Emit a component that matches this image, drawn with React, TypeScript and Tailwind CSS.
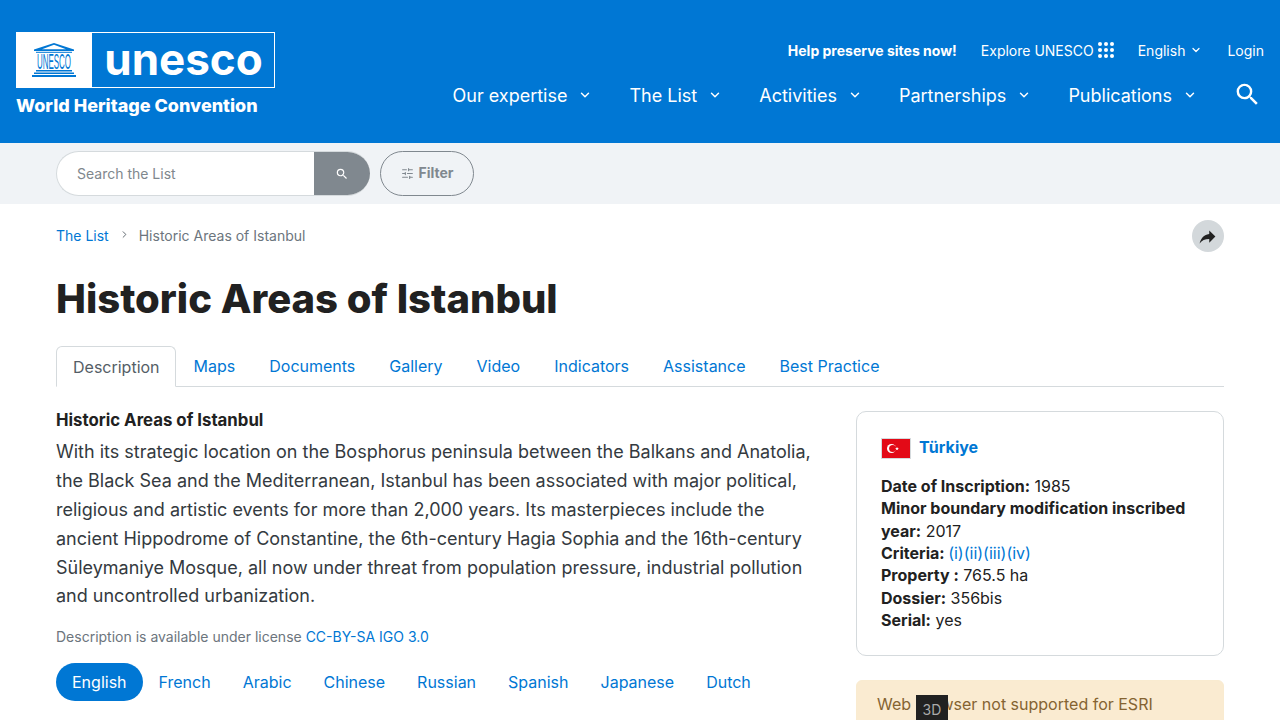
import { ChevronDown, ChevronRight, SlidersHorizontal } from "lucide-react";

const mainNav = ["Our expertise", "The List", "Activities", "Partnerships", "Publications"];
const tabs = ["Maps", "Documents", "Gallery", "Video", "Indicators", "Assistance", "Best Practice"];
const languages = ["French", "Arabic", "Chinese", "Russian", "Spanish", "Japanese", "Dutch"];

function SearchIcon({ size, className }: { size: number; className?: string }) {
  return (
    <svg width={size} height={size} viewBox="0 0 24 24" fill="currentColor" className={className}>
      <path d="M15.500 14h-.79l-.28-.27A6.471 6.471 0 0 0 16 9.500 6.500 6.500 0 1 0 9.500 16c1.610 0 3.090-.59 4.230-1.570l.27.28v.79l5 4.990L20.490 19l-4.990-5zm-6 0C7.010 14 5 11.990 5 9.500S7.010 5 9.500 5 14 7.010 14 9.500 11.990 14 9.500 14z" />
    </svg>
  );
}

function TempleLogo() {
  return (
    <svg width="46" height="36" viewBox="0 0 46 36" className="text-[#0077d4]" fill="currentColor">
      <path d="M23 1 3 7.500V9h40V7.500zM23 2.800 35 7.300H11z" fillRule="evenodd" />
      <rect x="5" y="9.800" width="36" height="1" />
      <text transform="translate(6 27) scale(0.36 1)" fontSize="22" fontFamily="'Liberation Sans', sans-serif">
        UNESCO
      </text>
      <rect x="5" y="28" width="36" height="1.500" />
      <rect x="3" y="30.500" width="40" height="1.500" />
      <rect x="1" y="33" width="44" height="2" />
    </svg>
  );
}

function Logo() {
  return (
    <div className="flex w-[259px] flex-col">
      <div className="flex h-[56px] bg-white">
        <div className="flex w-[75px] items-center justify-center">
          <TempleLogo />
        </div>
        <div className="flex flex-1 items-center justify-center border border-white bg-[#0077d4] pl-[1px]">
          <span className="-translate-y-px text-[44px] leading-none font-bold text-white">unesco</span>
        </div>
      </div>
      <div className="mt-[5px] text-[18px] leading-[26px] font-extrabold whitespace-nowrap text-white">
        World Heritage Convention
      </div>
    </div>
  );
}

function DotGrid() {
  return (
    <svg width="16" height="16" viewBox="0 0 16 16" fill="white">
      {[2, 8, 14].flatMap((y) =>
        [2, 8, 14].map((x) => <circle key={`${x}-${y}`} cx={x} cy={y} r="2" />),
      )}
    </svg>
  );
}

function Header() {
  return (
    <header className="flex h-[143px] justify-between bg-[#0077d4] pt-[32px] pr-[16px] pl-[16px] text-white">
      <Logo />
      <div className="flex flex-col items-end">
        <div className="flex h-[36px] items-center text-[14px]">
          <span className="font-bold">Help preserve sites now!</span>
          <span className="ml-[24px]">Explore UNESCO</span>
          <span className="ml-[4px]">
            <DotGrid />
          </span>
          <span className="ml-[24px]">English</span>
          <ChevronDown size={12} strokeWidth={2.5} className="ml-[5px]" />
          <span className="ml-[25px]">Login</span>
        </div>
        <nav className="mt-[9px] flex h-[36px] items-center text-[18px]">
          {mainNav.map((item) => (
            <div key={item} className="mr-[37px] flex items-center">
              <span>{item}</span>
              <ChevronDown size={14} strokeWidth={2.5} className="ml-[11px]" />
            </div>
          ))}
          <SearchIcon size={29} className="mr-[2px] -ml-px -translate-y-px" />
        </nav>
      </div>
    </header>
  );
}

function SearchBar() {
  return (
    <div className="flex h-[61px] items-start gap-[10px] bg-[#f0f3f6] pt-[8px] pl-[56px]">
      <div className="flex h-[45px] w-[314px] overflow-hidden rounded-full border border-r-0 border-[#d5dadd] bg-white">
        <div className="flex flex-1 items-center pl-[20px] text-[14px] text-[#7f878d]">Search the List</div>
        <div className="flex w-[56px] items-center justify-center bg-[#80888f] text-white">
          <SearchIcon size={14} />
        </div>
      </div>
      <div className="flex h-[45px] w-[94px] items-center justify-center gap-[4px] rounded-full border border-[#80888f] pl-[1px] text-[14px] font-bold text-[#80888f]">
        <SlidersHorizontal size={13} />
        <span className="-translate-y-px">Filter</span>
      </div>
    </div>
  );
}

function Breadcrumb() {
  return (
    <div className="flex h-[32px] items-center justify-between text-[14px]">
      <div className="flex -translate-y-px items-center">
        <span className="text-[#0077d4]">The List</span>
        <ChevronRight size={11} strokeWidth={2} className="mr-[9px] ml-[10px] -translate-y-px text-[#555e66]" />
        <span className="text-[#6c757d]">Historic Areas of Istanbul</span>
      </div>
      <div className="flex h-[32px] w-[32px] items-center justify-center rounded-full bg-[#d3d8db]">
        <svg width="21" height="21" viewBox="0 0 24 24" fill="#212121" className="-translate-x-px">
          <path d="M14 9V5l7 7-7 7v-4.100c-5 0-8.500 1.600-11 5.100 1-5 4-10 11-11z" />
        </svg>
      </div>
    </div>
  );
}

function Tabs() {
  return (
    <div className="mt-[23px] flex h-[41px] border-b border-[#d5dadd] text-[16px]">
      <div className="-mb-px mr-px flex h-[41px] items-center rounded-t-[6px] border border-b-white border-[#d5dadd] bg-white pr-[15px] pl-[16px] text-[#555e66]">
        Description
      </div>
      {tabs.map((tab) => (
        <div key={tab} className="flex items-center px-[17px] text-[#0077d4]">
          {tab}
        </div>
      ))}
    </div>
  );
}

function Description() {
  return (
    <div className="-mt-[3px] w-[768px] shrink-0">
      <h2 className="text-[16.800px] leading-[24px] font-bold text-[#212121]">Historic Areas of Istanbul</h2>
      <p className="mt-[6.400px] text-[18px] leading-[28.800px] text-[#343a40]">
        With its strategic location on the Bosphorus peninsula between the Balkans and Anatolia, the Black Sea and the
        Mediterranean, Istanbul has been associated with major political, religious and artistic events for more than
        2,000 years. Its masterpieces include the ancient Hippodrome of Constantine, the 6th-century Hagia Sophia and
        the 16th-century Süleymaniye Mosque, all now under threat from population pressure, industrial pollution and
        uncontrolled urbanization.
      </p>
      <p className="mt-[14.600px] text-[14px] leading-[21px] text-[#6c757d]">
        Description is available under license <span className="text-[#0077d4]">CC-BY-SA IGO 3.0</span>
      </p>
      <div className="mt-[16px] flex items-center text-[16px] text-[#0077d4]">
        <span className="flex h-[38px] items-center rounded-full bg-[#0077d4] px-[16px] text-white">English</span>
        {languages.map((lang) => (
          <span key={lang} className="px-[16px]">
            {lang}
          </span>
        ))}
      </div>
    </div>
  );
}

function InfoCard() {
  return (
    <div className="h-[245px] rounded-[10px] border border-[#d5dadd] px-[24px] pt-[24px] text-[16px] leading-[22.400px] text-[#212121]">
      <div className="flex h-[24px] items-center">
        <svg width="30" height="21" viewBox="0 0 30 21" className="mr-[8px]">
          <rect width="30" height="21" fill="#d5dadd" />
          <rect x="1" y="1" width="28" height="19" fill="#e30a17" />
          <circle cx="10.500" cy="10.500" r="4.500" fill="#fff" />
          <circle cx="11.700" cy="10.500" r="3.600" fill="#e30a17" />
          <path d="M16 8.800l.5 1.300 1.400 0-1.100.9.400 1.300-1.200-.8-1.200.8.400-1.300-1.100-.9 1.400 0z" fill="#fff" />
        </svg>
        <span className="-translate-y-px font-bold text-[#0077d4]">Türkiye</span>
      </div>
      <div className="mt-[14.800px]">
        <div>
          <b>Date of Inscription:</b> 1985
        </div>
        <div>
          <b>Minor boundary modification inscribed year:</b> 2017
        </div>
        <div>
          <b>Criteria:</b> <span className="-ml-px text-[#0077d4]">(i)(ii)(iii)(iv)</span>
        </div>
        <div>
          <b>Property :</b> 765.5 ha
        </div>
        <div>
          <b>Dossier:</b> 356bis
        </div>
        <div>
          <b>Serial:</b> yes
        </div>
      </div>
    </div>
  );
}

function Sidebar() {
  return (
    <aside className="relative w-[368px] shrink-0">
      <InfoCard />
      <div className="mt-[24px] h-[80px] rounded-[6px] border border-[#f9ebd0] bg-[#faebd1] px-[20px] pt-[11px] text-[16px] leading-[24px] text-[#856331]">
        Web browser not supported for ESRI
      </div>
      <div className="absolute top-[284px] left-[60px] flex h-[32px] w-[32px] justify-center bg-[#212121] pt-[4px] text-[14px] text-[#aaaaaa]">
        3D
      </div>
    </aside>
  );
}

export default function App() {
  return (
    <div className="h-[720px] overflow-hidden bg-white font-['Inter',sans-serif]">
      <Header />
      <SearchBar />
      <main className="px-[56px] pt-[16px]">
        <Breadcrumb />
        <h1 className="mt-[23px] text-[40px] leading-[48px] font-extrabold text-[#212121]">
          Historic Areas of Istanbul
        </h1>
        <Tabs />
        <div className="mt-[24px] flex justify-between">
          <Description />
          <Sidebar />
        </div>
      </main>
    </div>
  );
}
